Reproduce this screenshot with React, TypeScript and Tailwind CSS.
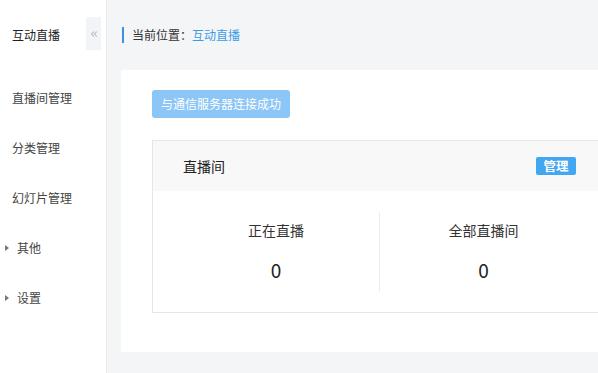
import React from "react";
import { ChevronsLeft } from "lucide-react";

const navItems = [
  { label: "直播间管理", caret: false },
  { label: "分类管理", caret: false },
  { label: "幻灯片管理", caret: false },
  { label: "其他", caret: true },
  { label: "设置", caret: true },
];

function Stat({ label, value, divider }: { label: string; value: number; divider?: boolean }) {
  return (
    <div
      className={`flex h-[80px] w-[207px] flex-col items-center pt-[8px] ${
        divider ? "border-r border-[#ececec]" : ""
      }`}
    >
      <span className="text-[14px] leading-[20px] text-[#333]">{label}</span>
      <span className="mt-[18px] text-[19px] leading-[24px] text-[#222]">{value}</span>
    </div>
  );
}

export default function App() {
  return (
    <div className="flex h-screen w-full overflow-hidden bg-white font-['Noto_Sans_CJK_SC',sans-serif]">
      <aside className="w-[107px] shrink-0 border-r border-[#e8e8e8] bg-white">
        <div className="flex h-[70px] items-center pl-[12px] pr-[5px]">
          <span className="text-[12px] text-[#222]">互动直播</span>
          <button className="ml-auto mt-[-3px] flex h-[33px] w-[15px] items-center justify-center bg-[#f2f4f7] text-[#c0c4cc]">
            <ChevronsLeft className="h-[10px] w-[10px]" strokeWidth={3} />
          </button>
        </div>
        <ul className="pt-[3px]">
          {navItems.map((item) => (
            <li key={item.label} className="flex h-[50px] items-center text-[12px] text-[#444]">
              {item.caret ? (
                <>
                  <span className="ml-[5px] mr-[8px] h-0 w-0 border-y-[3.5px] border-l-[4px] border-y-transparent border-l-[#777]" />
                  <span>{item.label}</span>
                </>
              ) : (
                <span className="pl-[12px]">{item.label}</span>
              )}
            </li>
          ))}
        </ul>
      </aside>

      <main className="flex-1 overflow-hidden bg-[#f4f5f7] pl-[14px]">
        <div className="flex h-[70px] items-center">
          <span className="ml-[1px] h-[16px] w-[2px] bg-[#3d8fe0]" />
          <span className="ml-[8px] text-[12px] text-[#333]">当前位置：</span>
          <span className="text-[12px] text-[#3b9be8]">互动直播</span>
        </div>

        <section className="h-[282px] w-[560px] bg-white pl-[31px] pt-[20px]">
          <button className="h-[28px] rounded-[3px] bg-[#8cc6f6] px-[9px] text-[12px] text-white">
            与通信服务器连接成功
          </button>

          <div className="mt-[22px] w-[480px] border border-[#e6e6e6]">
            <div className="flex h-[50px] items-center bg-[#f8f8f8] pl-[30px] pr-[55px]">
              <span className="text-[14px] text-[#222]">直播间</span>
              <span className="ml-auto flex h-[18px] w-[40px] items-center justify-center rounded-[2px] bg-[#41a7f0] text-[12.5px] font-bold text-white">
                管理
              </span>
            </div>
            <div className="flex h-[121px] items-center pl-[20px]">
              <Stat label="正在直播" value={0} divider />
              <Stat label="全部直播间" value={0} />
            </div>
          </div>
        </section>
      </main>
    </div>
  );
}
